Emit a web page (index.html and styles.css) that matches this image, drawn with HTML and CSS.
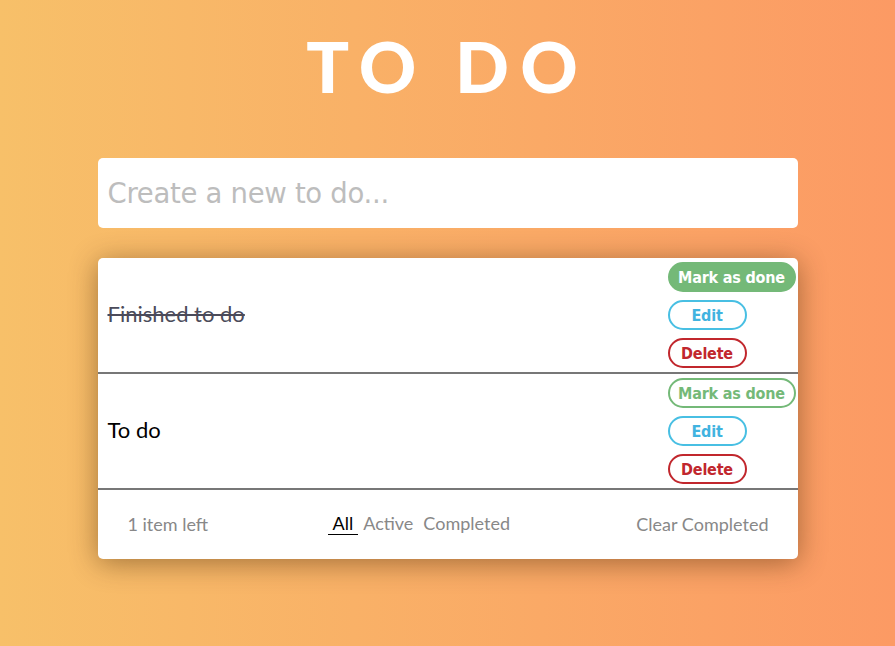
FILE: index.html
```html
<!DOCTYPE html>
<html>
<head>
<meta charset="utf-8">
<link rel="stylesheet" href="styles.css">
</head>
<body>
<main class="app">
  <h1 class="title">TO DO</h1>
  <div class="new-todo">Create a new to do...</div>
  <section class="card">
    <div class="item">
      <span class="item-text done">Finished to do</span>
      <div class="actions">
        <button class="btn btn-mark filled">Mark as done</button>
        <button class="btn btn-edit">Edit</button>
        <button class="btn btn-delete">Delete</button>
      </div>
    </div>
    <div class="item">
      <span class="item-text">To do</span>
      <div class="actions">
        <button class="btn btn-mark">Mark as done</button>
        <button class="btn btn-edit">Edit</button>
        <button class="btn btn-delete">Delete</button>
      </div>
    </div>
    <footer class="footer">
      <span class="count">1 item left</span>
      <nav class="filters">
        <span class="filter active">All</span>
        <span class="filter">Active</span>
        <span class="filter">Completed</span>
      </nav>
      <span class="clear">Clear Completed</span>
    </footer>
  </section>
</main>
</body>
</html>
```

FILE: styles.css
```css
* { box-sizing: border-box; }
html, body { margin: 0; height: 100%; }
body {
  background: linear-gradient(to right, #f7c069, #fc9a64);
  font-family: Lato, "Open Sans", sans-serif;
  overflow: hidden;
}
.app {
  width: 700px;
  margin: 0 auto;
  padding-top: 24px;
}
.title {
  margin: 0;
  height: 134px;
  text-align: center;
  color: #fff;
  font-family: Lato, sans-serif;
  font-weight: 900;
  font-size: 71px;
  line-height: 84px;
  letter-spacing: 11px;
}
.new-todo {
  height: 70px;
  background: #fff;
  border-radius: 5px;
  padding-left: 10px;
  display: flex;
  align-items: center;
  color: #bdbdbd;
  font-family: "DejaVu Sans", Verdana, sans-serif;
  font-size: 27.5px;
  letter-spacing: -0.3px;
}
.card {
  margin-top: 30px;
  background: #fff;
  border-radius: 5px;
  box-shadow: 0 4px 28px rgba(60, 30, 0, 0.45);
}
.item {
  display: flex;
  justify-content: space-between;
  align-items: center;
  border-bottom: 2px solid #777;
  padding: 4px 2px 4px 10px;
}
.item-text {
  font-size: 22px;
  color: #000;
  margin-bottom: 4px;
}
.item-text.done {
  color: #4b4b5a;
  text-decoration: line-through;
}
.actions {
  display: flex;
  flex-direction: column;
  align-items: flex-start;
  gap: 8px;
  width: 128px;
}
.btn {
  height: 30px;
  min-width: 79px;
  padding: 0 6px;
  border-radius: 16px;
  border: 2px solid;
  background: #fff;
  font-family: "DejaVu Sans Condensed", "DejaVu Sans", sans-serif;
  font-stretch: condensed;
  font-weight: bold;
  font-size: 16px;
  letter-spacing: -0.2px;
  cursor: pointer;
}
.btn-mark { border-color: #74b978; color: #74b978; width: 128px; }
.btn-mark.filled { background: #74b978; color: #fff; }
.btn-edit { border-color: #48bfe3; color: #41b3e0; }
.btn-delete { border-color: #c1272d; color: #c1272d; }
.footer {
  height: 69px;
  display: flex;
  justify-content: space-between;
  align-items: center;
  padding: 0 29px 2px 30px;
  color: #888;
  font-size: 18px;
}
.filters { display: flex; margin-right: 2px; }
.filter { padding: 0 5px; }
.filter.active {
  color: #000;
  border-bottom: 1px solid #000;
}
```
